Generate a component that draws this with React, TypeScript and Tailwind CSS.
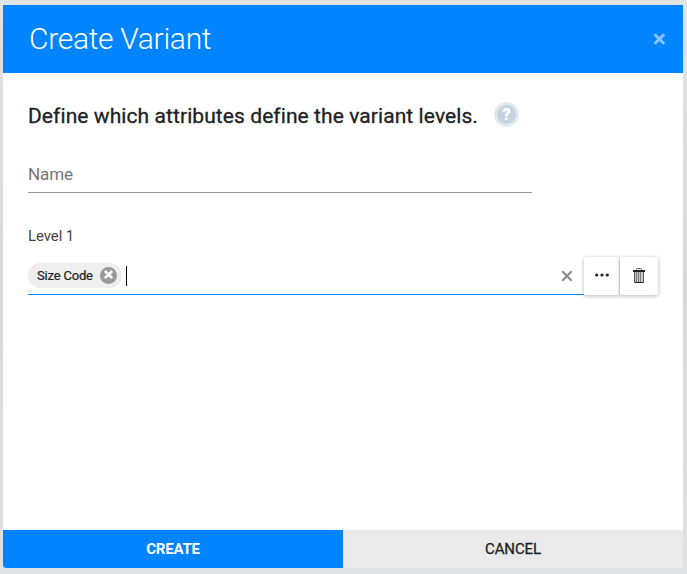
import React from "react";

function HelpIcon() {
  return (
    <span className="relative -top-[2px] ml-[16px] flex size-[25px] items-center justify-center rounded-full border-[3px] border-[#e4e9ec] bg-[#c3d4e1] pt-px text-[16px] leading-none font-black text-white">
      ?
    </span>
  );
}

function TrashIcon() {
  return (
    <svg width="12" height="16" viewBox="0 0 12 16" fill="none" stroke="#222">
      <path d="M3.500 2.500V1.500Q3.500 .5 4.500 .5H7.500Q8.500 .5 8.500 1.500V2.500" stroke="#555" />
      <path d="M0 3H12" strokeWidth="2" />
      <path d="M1.500 4V14.500M3.500 4V14M5.500 4V14M10.500 4V14.500" stroke="#555" />
      <path d="M2 4H10V14H2Z" fill="#999" fillOpacity="0.5" stroke="none" />
      <path d="M7.500 4V14" stroke="#777" />
      <path d="M1.500 14.500H10.500" />
    </svg>
  );
}

export default function App() {
  return (
    <div className="h-[574px] w-[687px] overflow-hidden bg-linear-to-b from-[#e3e3e4] via-[#d6d7d9] to-[#e0e1e2] pt-[5px] pl-[3px] font-['Roboto',sans-serif] text-[#212121]">
      <div className="flex h-[563px] w-[680px] flex-col overflow-hidden rounded-b-[3px] bg-white">
        <header className="flex h-[68px] shrink-0 items-center justify-between bg-[#0084ff] pr-[17px] pl-[26px]">
          <h1 className="text-[30px] leading-[36px] font-light tracking-[-0.3px] text-white">Create Variant</h1>
          <svg width="13" height="12" viewBox="0 0 13 12" stroke="#8cc8ff" strokeWidth="2.800">
            <path d="M1.500 1.300L11.200 10.700M11.200 1.300L1.500 10.700" />
          </svg>
        </header>
        <main className="flex-1 pl-[25px]">
          <div className="flex items-center pt-[30px]">
            <h2 className="w-[450px] text-[21px] leading-[26px] font-normal tracking-[0.08px] whitespace-nowrap [-webkit-text-stroke:0.3px_#212121]">
              Define which attributes define the variant levels.
            </h2>
            <HelpIcon />
          </div>
          <div className="mt-[28px] h-[36px] w-[504px] border-b border-[#949494] pt-[5px] text-[17px] leading-[24px] tracking-[-0.1px] text-[#757575]">
            Name
          </div>
          <div className="mt-[33px] text-[15px] leading-[20px] tracking-[-0.1px] text-[#444]">Level 1</div>
          <div className="mt-[11px] flex h-[38px]">
            <div className="flex w-[556px] items-center border-b border-b-[#0084ff] pr-[11px]">
              <span className="flex h-[25px] items-center rounded-full bg-[#eee] pr-[5px] pl-[9px] text-[13px] tracking-[-0.18px] [-webkit-text-stroke:0.2px_#212121]">
                Size Code
                <svg className="ml-[7px]" width="17" height="17" viewBox="0 0 17 17">
                  <circle cx="8.500" cy="8.500" r="8.500" fill="#999" />
                  <path d="M4.800 4L12.200 11.200M12.200 4L4.800 11.200" stroke="white" strokeWidth="2.500" />
                </svg>
              </span>
              <span className="ml-[4px] h-[20px] w-px bg-black" />
              <svg className="ml-auto" width="12" height="12" viewBox="0 0 12 12" stroke="#8a8a8a" strokeWidth="2.100">
                <path d="M1.300 1.300L10.700 10.700M10.700 1.300L1.300 10.700" />
              </svg>
            </div>
            <button className="flex h-[38px] w-[35px] items-center justify-center rounded-[2px] bg-white pb-[2px] shadow-[0_1px_4px_rgba(0,0,0,0.3)]">
              <svg width="14" height="4" viewBox="0 0 14 4" fill="#222">
                <circle cx="1.700" cy="2" r="1.600" />
                <circle cx="7" cy="2" r="1.600" />
                <circle cx="12.300" cy="2" r="1.600" />
              </svg>
            </button>
            <button className="ml-px flex h-[38px] w-[38px] items-center justify-center rounded-[2px] bg-white shadow-[0_1px_4px_rgba(0,0,0,0.3)]">
              <TrashIcon />
            </button>
          </div>
        </main>
        <footer className="flex h-[38px] shrink-0 text-[15px]">
          <button className="w-[340px] bg-[#0084ff] font-bold tracking-[-0.2px] text-white">CREATE</button>
          <button className="w-[340px] bg-[#eaeaea] font-normal tracking-[-0.1px] [-webkit-text-stroke:0.3px_#212121]">CANCEL</button>
        </footer>
      </div>
    </div>
  );
}
